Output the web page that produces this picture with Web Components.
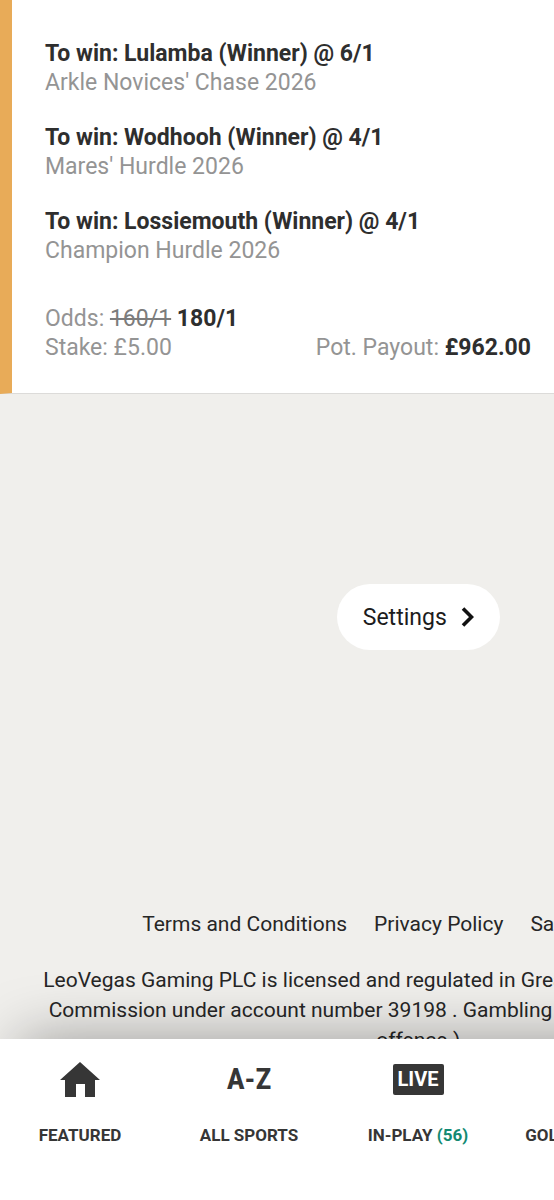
<!DOCTYPE html>
<html lang="en">
<head>
<meta charset="utf-8">
<meta name="viewport" content="width=device-width, initial-scale=1">
<title>My bets</title>
<style>
  html, body { margin: 0; height: 100%; }
  body { font-family: Roboto, "Liberation Sans", sans-serif; background: #f0efec; color: #2e2e2e; }
</style>
</head>
<body>
<app-shell>
  <bet-card>
    <bet-leg event="Arkle Novices' Chase 2026">To win: Lulamba (Winner) @ 6/1</bet-leg>
    <bet-leg event="Mares' Hurdle 2026">To win: Wodhooh (Winner) @ 4/1</bet-leg>
    <bet-leg event="Champion Hurdle 2026">To win: Lossiemouth (Winner) @ 4/1</bet-leg>
    <bet-summary slot="summary" was="160/1" odds="180/1" stake="£5.00" payout="£962.00"></bet-summary>
  </bet-card>
  <settings-button>Settings</settings-button>
  <legal-footer></legal-footer>
  <tab-bar slot="nav">
    <tab-item label="FEATURED">
      <svg width="40" height="35" viewBox="0 0 40 35" aria-hidden="true"><path fill="#363636" d="M20 0 40 18H35V35H25V22H16V35H5V18H0Z"/></svg>
    </tab-item>
    <tab-item label="ALL SPORTS"><az-icon></az-icon></tab-item>
    <tab-item label="IN-PLAY" count="(56)"><live-icon></live-icon></tab-item>
    <tab-item label="GOLDEN GOALS"></tab-item>
  </tab-bar>
</app-shell>
<script>
const define = (name, html, setup) => {
  const template = document.createElement('template');
  template.innerHTML = html;
  customElements.define(name, class extends HTMLElement {
    constructor() {
      super();
      this.attachShadow({ mode: 'open' }).append(template.content.cloneNode(true));
    }
    connectedCallback() {
      if (setup) setup(this, this.shadowRoot);
    }
  });
};

define('app-shell', `
  <style>
    :host { display: grid; grid-template-rows: minmax(0, 1fr) auto; grid-template-columns: minmax(0, 1fr); height: 100vh; overflow: hidden; }
    main { overflow-x: hidden; overflow-y: auto; scrollbar-width: none; }
  </style>
  <main><slot></slot></main>
  <slot name="nav"></slot>`);

define('bet-card', `
  <style>
    :host { display: block; }
    article { padding: 39px 23px 31px 33px; border-left: 12px solid #e8ab58; background: #fff; border-bottom: 1px solid #dcdbd9; }
    .legs { display: grid; gap: 26px; margin-bottom: 39px; }
  </style>
  <article><div class="legs"><slot></slot></div><slot name="summary"></slot></article>`);

define('bet-leg', `
  <style>
    :host { display: block; font-size: 23px; line-height: 29px; white-space: nowrap; }
    .pick { font-weight: 700; }
    .event { color: #949494; }
  </style>
  <div class="pick"><slot></slot></div>
  <div class="event"></div>`,
  (el, root) => { root.querySelector('.event').textContent = el.getAttribute('event'); });

define('bet-summary', `
  <style>
    :host { display: flex; justify-content: space-between; align-items: flex-end; font-size: 23px; line-height: 29px; color: #949494; white-space: nowrap; }
    b { color: #2e2e2e; }
    s { color: #7c7c7c; }
  </style>
  <div><div>Odds: <s></s> <b class="odds"></b></div><div>Stake: <span></span></div></div>
  <div>Pot. Payout: <b class="payout"></b></div>`,
  (el, root) => {
    root.querySelector('s').textContent = el.getAttribute('was');
    root.querySelector('.odds').textContent = el.getAttribute('odds');
    root.querySelector('span').textContent = el.getAttribute('stake');
    root.querySelector('.payout').textContent = el.getAttribute('payout');
  });

define('settings-button', `
  <style>
    :host { display: flex; justify-content: center; width: 151%; padding: 190px 0 259px; }
    button { display: flex; align-items: center; gap: 14px; height: 66px; padding: 0 26px; border: 0; border-radius: 33px; background: #fff; color: #1c1c1c; font-family: inherit; font-size: 23px; }
    svg { display: block; }
  </style>
  <button type="button"><slot></slot><svg width="13" height="20" viewBox="0 0 13 20" aria-hidden="true"><path d="M2 1.5 10.5 10 2 18.5" fill="none" stroke="#111" stroke-width="3.6"/></svg></button>`);

define('legal-footer', `
  <style>
    :host { display: block; width: 151%; font-size: 21px; line-height: 30px; color: #262626; text-align: center; white-space: nowrap; }
    nav { display: flex; gap: 27px; padding-left: 17%; margin-bottom: 26px; }
    a { color: inherit; text-decoration: none; }
    p { margin: 0; }
  </style>
  <nav><a href="#terms">Terms and Conditions</a><a href="#privacy">Privacy Policy</a><a href="#safer">Safer Gambling</a></nav>
  <p>LeoVegas Gaming PLC is licensed and regulated in Great Britain by the Gambling<br>Commission under account number 39198 . Gambling under the age of 18 is an<br>offence.)</p>`);

define('tab-bar', `
  <style>
    :host { display: block; position: relative; width: 151%; background: #fff; box-shadow: 0 -20px 60px -20px rgba(0, 0, 0, .36); }
    nav { display: flex; gap: 9px; padding: 20px 0 53px; }
  </style>
  <nav><slot></slot></nav>`);

define('tab-item', `
  <style>
    :host { display: block; flex: none; width: 160px; }
    a { display: grid; grid-template-rows: 40px 24px; row-gap: 24px; justify-items: center; color: #363636; text-decoration: none; font-size: 17px; line-height: 24px; font-weight: 700; white-space: nowrap; }
    .icon { display: flex; align-items: center; }
    .count { color: #138a72; }
  </style>
  <a href="#"><span class="icon"><slot></slot></span><span><span class="label"></span><span class="count"></span></span></a>`,
  (el, root) => {
    root.querySelector('.label').textContent = el.getAttribute('label');
    if (el.hasAttribute('count')) root.querySelector('.count').textContent = ' ' + el.getAttribute('count');
  });

define('az-icon', `
  <style>:host { display: block; font-family: "Liberation Sans Narrow", "Roboto Condensed", Roboto, sans-serif; font-size: 30px; line-height: 40px; font-weight: 700; }</style>A-Z`);

define('live-icon', `
  <style>:host { display: block; padding: 0 5px; border-radius: 2px; background: #363636; color: #fff; font-size: 20px; line-height: 31px; font-weight: 700; }</style>LIVE`);
</script>
</body>
</html>
